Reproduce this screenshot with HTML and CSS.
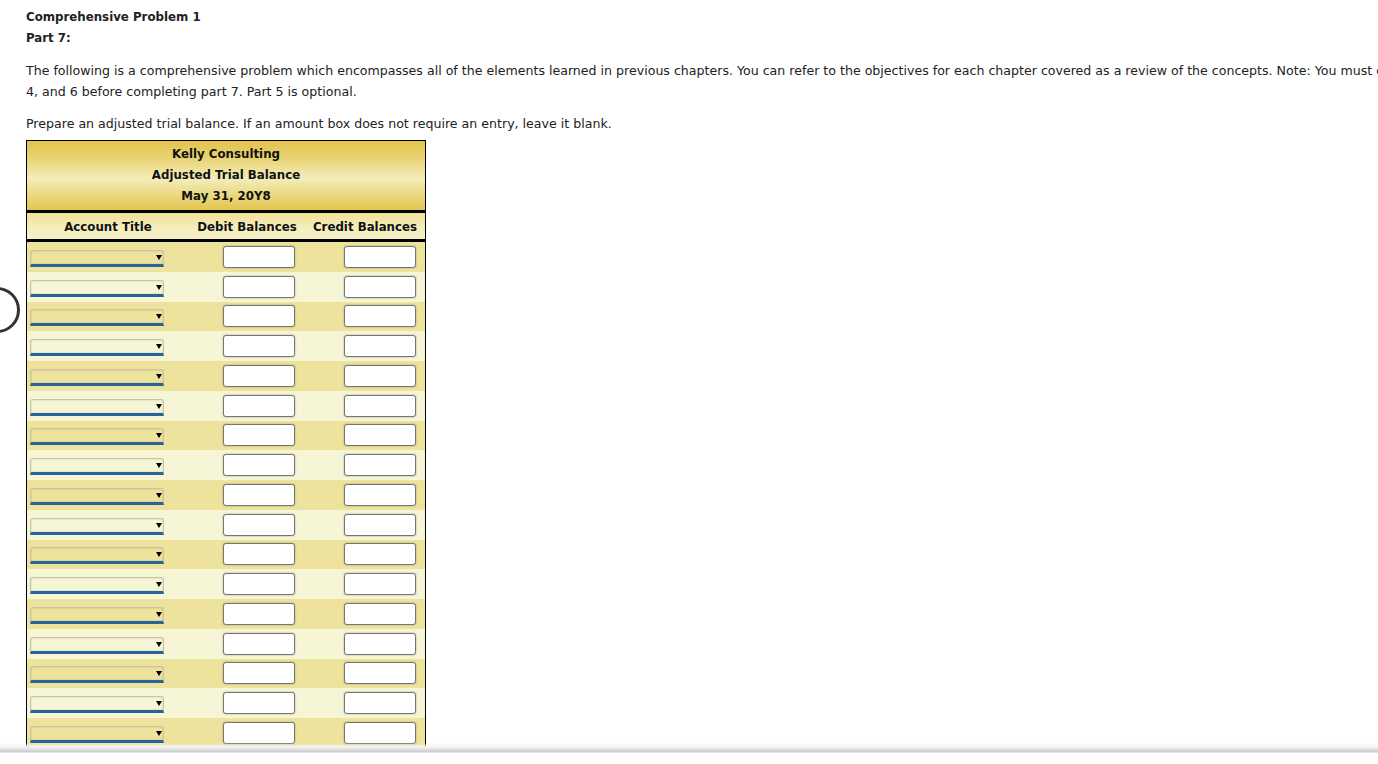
FILE: index.html
```html
<!DOCTYPE html>
<html>
<head>
<meta charset="utf-8">
<title>Comprehensive Problem 1</title>
<link rel="stylesheet" href="styles.css">
</head>
<body>
<div class="page">
  <div class="title">Comprehensive Problem 1</div>
  <div class="title">Part 7:</div>
  <p class="intro">The following is a comprehensive problem which encompasses all of the elements learned in previous chapters. You can refer to the objectives for each chapter covered as a review of the concepts. Note: You must complete parts 1, 2, 3, 4,&nbsp;and 6 before completing part 7. Part 5 is optional.</p>
  <p class="instr">Prepare an adjusted trial balance. If an amount box does not require an entry, leave it blank.</p>

  <div class="sheet">
    <div class="sheet-head">
      <div>Kelly Consulting</div>
      <div>Adjusted Trial Balance</div>
      <div>May 31, 20Y8</div>
    </div>
    <div class="col-head">
      <div class="c1">Account Title</div>
      <div class="c2">Debit Balances</div>
      <div class="c3">Credit Balances</div>
    </div>
    <div class="rows" id="rows"></div>
  </div>
</div>
<div class="ring"></div>
<div class="bottom-bar"></div>
<script src="script.js"></script>
</body>
</html>
```

FILE: script.js
```js
(function () {
  var rows = document.getElementById('rows');
  var html = '';
  for (var i = 0; i < 18; i++) {
    html += '<div class="row ' + (i % 2 ? 'even' : 'odd') + '">' +
      '<div class="c1"><div class="sel"><span class="arrow"></span></div></div>' +
      '<div class="c2"><input class="amt" type="text"></div>' +
      '<div class="c3"><input class="amt" type="text"></div>' +
      '</div>';
  }
  rows.innerHTML = html;
})();
```

FILE: styles.css
```css
html, body {
  margin: 0;
  padding: 0;
  background: #fff;
  overflow: hidden;
}
body {
  font-family: "DejaVu Sans", Verdana, sans-serif;
  font-size: 12.6px;
  color: #222;
  width: 1378px;
  height: 764px;
}
.page {
  padding: 7px 0 0 26px;
  width: 1500px;
}
.title {
  font-weight: bold;
  font-size: 11.8px;
  line-height: 21px;
}
.intro {
  margin: 11px 0 0 0;
  line-height: 21px;
}
.instr {
  margin: 11px 0 0 0;
  line-height: 21px;
}
.sheet {
  margin-top: 6px;
  width: 398px;
  border: 1px solid #000;
  border-bottom: none;
  font-size: 11.8px;
}
.sheet-head {
  height: 66px;
  padding-top: 3px;
  text-align: center;
  font-weight: bold;
  color: #111;
  line-height: 21px;
  background: linear-gradient(to bottom, #e2c44c 0%, #e8d272 25%, #f4edbb 54%, #ecdc8c 74%, #e3c64e 100%);
  border-bottom: 3px solid #000;
}
.col-head {
  display: grid;
  grid-template-columns: 162px 116px 120px;
  height: 26px;
  align-items: center;
  font-weight: bold;
  color: #111;
  background: linear-gradient(to bottom, #efe196 0%, #f5eebf 60%, #f6f0c8 100%);
  border-bottom: 3px solid #000;
}
.col-head .c1, .col-head .c2, .col-head .c3 {
  text-align: center;
  padding-top: 1px;
}
.row {
  display: grid;
  grid-template-columns: 162px 116px 120px;
  height: 29.75px;
  align-items: center;
}
.row.odd { background: #eee39c; }
.row.even { background: #f6f5d6; }
.row .c1 {
  padding-left: 3px;
}
.row .c2, .row .c3 {
  display: flex;
  justify-content: flex-end;
  padding-right: 10px;
}
.row .c3 { padding-right: 9px; }
.sel {
  position: relative;
  width: 134px;
  height: 17px;
  box-sizing: border-box;
  border: 1px solid #c9c4a8;
  border-bottom: 3px solid #26649a;
  border-radius: 3px 3px 0 0;
  box-shadow: inset 0 0 2px rgba(0,0,0,0.2);
  margin-top: 3px;
}
.arrow {
  position: absolute;
  right: 1px;
  top: 4px;
  width: 0;
  height: 0;
  border-left: 3.5px solid transparent;
  border-right: 3.5px solid transparent;
  border-top: 5px solid #000;
}
.amt {
  width: 72px;
  height: 22px;
  box-sizing: border-box;
  margin: 0;
  padding: 0 3px;
  border: 1px solid #767676;
  border-radius: 3px;
  background: #fff;
  box-shadow: 0 0 2px rgba(0,0,0,0.35);
  font-family: "DejaVu Sans", sans-serif;
  font-size: 12px;
}
.ring {
  position: fixed;
  left: -26px;
  top: 287px;
  width: 40px;
  height: 40px;
  border: 3px solid #333;
  border-radius: 50%;
}
.bottom-bar {
  position: fixed;
  left: 0;
  right: 0;
  bottom: 0;
  height: 21px;
  background: linear-gradient(to bottom, rgba(255,255,255,0) 0px, #f4f4f4 4px, #c9c9c9 9px, #fff 10px, #fff 21px);
}
```
